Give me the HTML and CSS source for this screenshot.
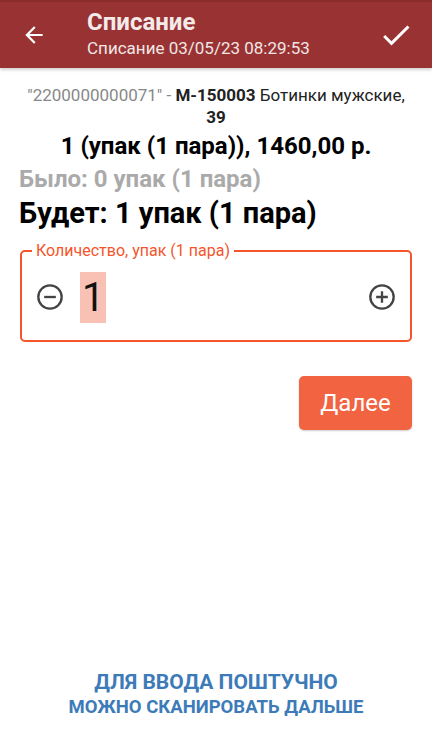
FILE: index.html
```html
<!DOCTYPE html>
<html lang="ru">
<head>
<meta charset="utf-8">
<link rel="stylesheet" href="styles.css">
</head>
<body>
<div class="screen">
  <header class="appbar">
    <svg class="icon back" viewBox="0 0 24 24" width="26" height="26"><path d="M20 11H7.83l5.59-5.59L12 4l-8 8 8 8 1.41-1.41L7.83 13H20v-2z" fill="#fff"/></svg>
    <div class="titles">
      <div class="title">Списание</div>
      <div class="subtitle">Списание 03/05/23 08:29:53</div>
    </div>
    <svg class="icon check" viewBox="0 0 24 24" width="36" height="36"><path d="M9 16.17L4.83 12l-1.42 1.41L9 19 21 7l-1.41-1.41z" fill="#fff"/></svg>
  </header>
  <main class="content">
    <p class="product"><span class="barcode">"2200000000071" - </span><b>М-150003</b> Ботинки мужские, <b>39</b></p>
    <p class="summary">1 (упак (1 пара)), 1460,00 р.</p>
    <p class="was">Было: 0 упак (1 пара)</p>
    <p class="will">Будет: 1 упак (1 пара)</p>
    <fieldset class="qty">
      <legend>Количество, упак (1 пара)</legend>
      <div class="qty-row">
        <svg class="circ" viewBox="0 0 24 24" width="28" height="28"><circle cx="12" cy="12" r="10" fill="none" stroke="#444" stroke-width="2"/><path d="M7 12h10" stroke="#444" stroke-width="2"/></svg>
        <span class="value"><span class="sel">1</span></span>
        <svg class="circ" viewBox="0 0 24 24" width="28" height="28"><circle cx="12" cy="12" r="10" fill="none" stroke="#444" stroke-width="2"/><path d="M7 12h10M12 7v10" stroke="#444" stroke-width="2"/></svg>
      </div>
    </fieldset>
    <div class="actions"><button class="next">Далее</button></div>
  </main>
  <footer class="hint">
    <div class="h1">ДЛЯ ВВОДА ПОШТУЧНО</div>
    <div class="h2">МОЖНО СКАНИРОВАТЬ ДАЛЬШЕ</div>
  </footer>
</div>
</body>
</html>
```
FILE: styles.css
```css
* { box-sizing: border-box; }
html, body { margin: 0; padding: 0; }
body { font-family: Roboto, "Noto Sans", sans-serif; background: #fff; color: #000; }
.screen { width: 432px; height: 740px; display: flex; flex-direction: column; }
.appbar {
  height: 68px; background: #993333; border-top: 2px solid #8a2c2c;
  display: flex; align-items: center; padding: 0 18px 0 21px;
  box-shadow: 0 2px 3px rgba(0,0,0,0.18); position: relative;
}
.back { margin-right: 40px; }
.titles { flex: 1; color: #fff; }
.title { font-size: 24px; font-weight: 700; line-height: 28px; margin-top: -5px; color: #f4eaea; }
.subtitle { font-size: 17px; line-height: 20px; margin-top: 2px; color: #f1e6e6; }
.content { padding: 0 20px; flex: 1; }
.product { margin: 16px 0 0; text-align: center; font-size: 17px; line-height: 22px; color: #222; }
.product b { font-weight: 700; }
.barcode { color: #888; }
.summary { margin: 3px 0 0; text-align: center; font-size: 24px; font-weight: 700; line-height: 30px; }
.was { margin: 2px 0 0; font-size: 24px; font-weight: 700; color: #aaa; line-height: 32px; margin-left: -1px; }
.will { margin: 1px 0 0; font-size: 29px; font-weight: 700; line-height: 34px; margin-left: -1px; }
.qty {
  margin: 13px 0 0; border: 2px solid #f4552b; border-radius: 5px;
  padding: 0 0 0 14px; height: 99px; min-width: 0;
}
.qty legend { color: #f4552b; font-size: 16px; padding: 0 4px; margin-left: -4px; line-height: 16px; }
.qty-row { display: flex; align-items: center; height: 76px; padding-right: 14px; }
.value { flex: 1; padding-left: 16px; display: flex; align-items: center; }
.sel { background: #f8c1b3; font-size: 40px; font-weight: 400; line-height: 51px; padding: 0 2px; color: #111; }
.actions { display: flex; justify-content: flex-end; margin-top: 34px; }
.next {
  background: #f26441; color: #fff; border: none; border-radius: 5px;
  font-family: Roboto, sans-serif; font-size: 24px; width: 113px; height: 54px;
  box-shadow: 0 1px 2px rgba(0,0,0,0.2);
}
.hint { text-align: center; color: #3d7bb8; font-weight: 700; padding-bottom: 21px; }
.h1 { font-size: 21px; line-height: 26px; }
.h2 { font-size: 18.5px; line-height: 24px; }
```
